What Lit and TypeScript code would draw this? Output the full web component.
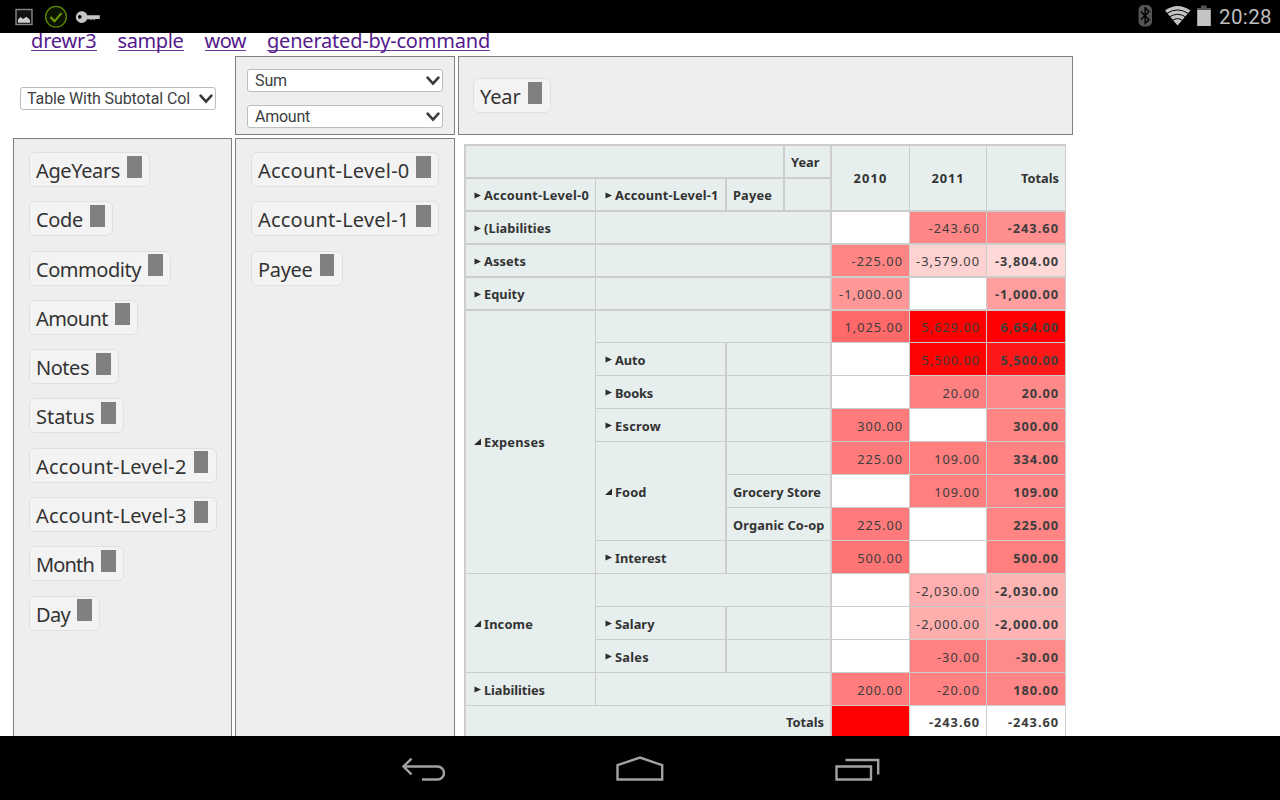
import { LitElement, html, css, svg } from "lit";
import { customElement, property } from "lit/decorators.js";
import { classMap } from "lit/directives/class-map.js";

/* A run of text tracked out or in so that it fills a given width. */
@customElement("fit-text")
class FitText extends LitElement {
  @property({ type: Number }) w = 0;
  @property() text = "";

  static styles = css`
    :host { display: inline-block; white-space: pre; }
    .run { display: inline-block; }
  `;

  updated() {
    const run = this.renderRoot.querySelector(".run") as HTMLElement;
    run.style.letterSpacing = "0px";
    const natural = run.getBoundingClientRect().width;
    const gap = (this.w - natural) / this.text.length;
    run.style.letterSpacing = gap.toFixed(3) + "px";
  }

  render() {
    return html`<span class="run">${this.text}</span>`;
  }
}

type Chip = [string, number];
const UNUSED: Chip[] = [
  ["AgeYears", 84], ["Code", 47], ["Commodity", 105], ["Amount", 72], ["Notes", 53],
  ["Status", 58.5], ["Account-Level-2", 150.5], ["Account-Level-3", 150.5], ["Month", 58], ["Day", 34],
];
const ROWS: Chip[] = [["Account-Level-0", 151.5], ["Account-Level-1", 151.5], ["Payee", 54.5]];
const LINKS: Chip[] = [["drewr3", 65.5], ["sample", 66], ["wow", 41.5], ["generated-by-command", 223]];

interface Head {
  t?: string; w?: number; col: string; row: string; mark?: "open" | "shut";
  thick?: boolean; low?: boolean; lift?: boolean; align?: "right" | "center";
}
const HEADS: Head[] = [
  { col: "1 / 4", row: "1", thick: true, low: true },
  { t: "Year", w: 28.5, col: "4", row: "1", thick: true, low: true },
  { t: "Account-Level-0", w: 105, col: "1", row: "2", mark: "shut", low: true },
  { t: "Account-Level-1", w: 103.5, col: "2", row: "2", mark: "shut", thick: true, low: true },
  { t: "Payee", w: 39, col: "3", row: "2", thick: true, low: true },
  { col: "4", row: "2", thick: true, low: true },
  { t: "2010", w: 34, col: "5", row: "1 / 3", align: "center", low: true, lift: true },
  { t: "2011", w: 33, col: "6", row: "1 / 3", align: "center", low: true, lift: true },
  { t: "Totals", w: 38, col: "7", row: "1 / 3", align: "right", low: true, lift: true },
  { t: "(Liabilities", w: 67, col: "1", row: "3", mark: "shut", low: true },
  { col: "2 / 5", row: "3", thick: true, low: true },
  { t: "Assets", w: 42, col: "1", row: "4", mark: "shut", low: true },
  { col: "2 / 5", row: "4", thick: true, low: true },
  { t: "Equity", w: 40.5, col: "1", row: "5", mark: "shut", low: true },
  { col: "2 / 5", row: "5", thick: true, low: true },
  { t: "Expenses", w: 61, col: "1", row: "6 / 14", mark: "open", lift: true },
  { col: "2 / 5", row: "6", thick: true },
  { t: "Auto", w: 30.5, col: "2", row: "7", mark: "shut", thick: true },
  { col: "3 / 5", row: "7", thick: true },
  { t: "Books", w: 38, col: "2", row: "8", mark: "shut", thick: true },
  { col: "3 / 5", row: "8", thick: true },
  { t: "Escrow", w: 46, col: "2", row: "9", mark: "shut", thick: true },
  { col: "3 / 5", row: "9", thick: true },
  { t: "Food", w: 31.5, col: "2", row: "10 / 13", mark: "open", thick: true },
  { col: "3 / 5", row: "10", thick: true },
  { t: "Grocery Store", w: 88, col: "3 / 5", row: "11", thick: true },
  { t: "Organic Co-op", w: 91.5, col: "3 / 5", row: "12", thick: true },
  { t: "Interest", w: 51.5, col: "2", row: "13", mark: "shut", thick: true },
  { col: "3 / 5", row: "13", thick: true },
  { t: "Income", w: 49, col: "1", row: "14 / 17", mark: "open" },
  { col: "2 / 5", row: "14", thick: true },
  { t: "Salary", w: 39.5, col: "2", row: "15", mark: "shut", thick: true },
  { col: "3 / 5", row: "15", thick: true },
  { t: "Sales", w: 34, col: "2", row: "16", mark: "shut", thick: true },
  { col: "3 / 5", row: "16", thick: true },
  { t: "Liabilities", w: 61, col: "1", row: "17", mark: "shut" },
  { col: "2 / 5", row: "17", thick: true },
  { t: "Totals", w: 38, col: "1 / 5", row: "18", align: "right", thick: true },
];

const VALUES: (number | null)[][] = [
  [null, -243.6, -243.6],
  [-225, -3579, -3804],
  [-1000, null, -1000],
  [1025, 5629, 6654],
  [null, 5500, 5500],
  [null, 20, 20],
  [300, null, 300],
  [225, 109, 334],
  [null, 109, 109],
  [225, null, 225],
  [500, null, 500],
  [null, -2030, -2030],
  [null, -2000, -2000],
  [null, -30, -30],
  [200, -20, 180],
];

const money = (v: number) =>
  v.toLocaleString("en-US", { minimumFractionDigits: 2, maximumFractionDigits: 2 });

const moneyWidth = (s: string, bold: boolean) => {
  let w = 0;
  for (const c of s) w += c === "." || c === "," ? 4.3 : c === "-" ? 5.6 : 8.3;
  return w;
};

const heat = (v: number, total: boolean) => {
  const f = Math.max(0, Math.round(total ? (6654 - v) * 0.0207 : (5629 - v) * 0.0228));
  return `rgb(255, ${f}, ${f})`;
};

@customElement("app-root")
class AppRoot extends LitElement {
  static styles = css`
    :host {
      display: flex; flex-direction: column; width: 1280px; height: 800px; overflow: hidden;
      background: #fff; color: #333; font-family: "Noto Sans", sans-serif;
    }
    * { box-sizing: border-box; }
    svg { display: block; }
    .status {
      height: 33px; flex: none; background: #000; display: flex; justify-content: space-between;
    }
    .right { display: flex; }
    .clock {
      font: 20.5px/35px Roboto, sans-serif; color: #bebebe; width: 61px;
    }
    .page { height: 703px; flex: none; overflow: hidden; padding-left: 13px; }
    .links {
      display: flex; gap: 21px; height: 23px; padding-left: 18px; font-size: 20px; line-height: 16px;
    }
    .links a { color: #551a8b; height: 18px; border-bottom: 1px solid #6b3a9b; white-space: nowrap; }
    .grid {
      display: grid; grid-template-columns: 219px 220px 615px; grid-template-rows: 79px 640px; gap: 3px;
    }
    .box { background: #eee; border: 1px solid #808080; }
    .renderer { padding: 31px 0 0 6.6px; }
    .aggregate { padding: 12px 0 0 11px; display: flex; flex-direction: column; gap: 12.5px; }
    .across { padding: 21px 0 0 14px; }
    .list { padding: 13px 0 0 15px; display: flex; flex-direction: column; align-items: flex-start; gap: 14.3px; }
    .select {
      width: 196px; height: 23px; border: 1px solid #bdbdbd; border-radius: 3px; background: #fff;
      display: flex; justify-content: space-between; padding: 0 2px 0 7px;
      font: 16px/22px Roboto, sans-serif; color: #3c3f42;
    }
    .renderer .select { padding-left: 6.4px; }
    .select svg { margin-top: 5px; }
    .chip {
      display: inline-flex; height: 35px; border: 1px solid #e0e0e0; border-radius: 6px; background: #f3f3f3;
      padding: 3px 7.5px 0 6px; gap: 7px; font-size: 20px; line-height: 30px; vertical-align: top;
    }
    .knob { width: 14.5px; height: 22px; background: #808080; margin-top: -0.5px; }
    .pivot {
      margin: 6px 0 0 6px; width: 602px; display: grid; font-size: 12.8px; line-height: 20px;
      grid-template-columns: 130px 131px 58px 47px 78px 77px 79px;
      grid-template-rows: repeat(5, 33px) 32px repeat(11, 33px) 32px;
      border-top: 2px solid #cdcdcd; border-left: 2px solid #cdcdcd;
    }
    .cell {
      border: 0 solid #cdcdcd; border-right-width: 1px; border-bottom-width: 1px;
      display: flex; align-items: center; padding: 1px 6px 0; white-space: nowrap;
    }
    .head { background: #e6eeee; font-weight: 700; }
    .thick { border-right-width: 2px; }
    .low { border-bottom-width: 2px; }
    .lift { padding-top: 0; padding-bottom: 1px; }
    .end { justify-content: flex-end; }
    .mid { justify-content: center; }
    .value { color: #3d3d3d; }
    .bold { font-weight: 700; }
    .mark { width: 10px; margin: 1px 0 0 2px; flex: none; }
    .inner { padding-left: 7px; }
    .full { background: #f00; }
    .nav { height: 64px; flex: none; background: #000; display: flex; justify-content: center; }
  `;

  chip([t, w]: Chip) {
    return html`<div class="chip"><fit-text .text=${t} .w=${w}></fit-text><span class="knob"></span></div>`;
  }

  select(t: string, w: number) {
    return html`<div class="select"><fit-text .text=${t} .w=${w}></fit-text>
      <svg width="14" height="12"><path d="M1.6 2.6L7 8.6L12.4 2.6" fill="none" stroke="#3a3a3a" stroke-width="2.6" stroke-linecap="round"/></svg></div>`;
  }

  head(h: Head) {
    const cls = {
      cell: true, head: true, thick: !!h.thick, low: !!h.low, lift: !!h.lift,
      end: h.align === "right", mid: h.align === "center", inner: !!h.mark && h.col === "2",
    };
    const shape = h.mark === "open" ? svg`<path d="M0 8L7 1.5V8Z"/>` : svg`<path d="M.5 1.5L7 4.5L.5 7.5Z"/>`;
    return html`<div class=${classMap(cls)} style="grid-column:${h.col};grid-row:${h.row}">
      ${h.mark ? html`<svg class="mark" width="10" height="10" fill="#2c2c2c">${shape}</svg>` : ""}
      ${h.t ? html`<fit-text .text=${h.t} .w=${h.w}></fit-text>` : ""}
    </div>`;
  }

  value(v: number | null, r: number, c: number) {
    const cls = { cell: true, value: true, end: true, bold: c === 2, low: r < 3 };
    const at = `grid-column:${c + 5};grid-row:${r + 3};`;
    if (v === null) return html`<div class=${classMap(cls)} style=${at}></div>`;
    const s = money(v);
    return html`<div class=${classMap(cls)} style="${at}background:${heat(v, c === 2)}">
      <fit-text .text=${s} .w=${moneyWidth(s, c === 2)}></fit-text></div>`;
  }

  render() {
    return html`
      <div class="status">
        <svg width="110" height="33">
          <rect x="16" y="9.5" width="16" height="15" fill="#111" stroke="#888" stroke-width="1.4"/>
          <path d="M18 22.8V19.5L20.5 17L23 19L26.5 16.8L30 20V22.8Z" fill="#ccc"/>
          <circle cx="56" cy="16.8" r="10.4" fill="#0c1400" stroke="#5b8a00" stroke-width="1.3"/>
          <path d="M50.5 17L54.5 21.3L61.5 13.2" fill="none" stroke="#6fa008" stroke-width="2"/>
          <path d="M82 11.2A5.900 5.900 0 1 0 87.200 19.200H90L91 20L92.500 19L94 20L95.500 19H99.800V15.200H87.200A5.900 5.900 0 0 0 82 11.200ZM79.800 15.100a1.800 1.800 0 1 1 0 3.600a1.800 1.800 0 0 1 0-3.600Z" fill="#c4c4c4" fill-rule="evenodd"/>
        </svg>
        <div class="right">
          <svg width="90" height="33">
            <rect x="9.500" y="5" width="13.500" height="21.500" rx="5" fill="#555"/>
            <path d="M11.800 11.500L20 19.700L16.200 23.200V8L20 11.500L11.800 19.700" fill="none" stroke="#000" stroke-width="1.500"/>
            <path d="M48.500 25.500L36 10.500Q48.500 1.500 61.500 10.500Z" fill="#c4c4c4"/>
            <path d="M38 13.300Q48.500 6.500 59 13.300M40.500 16.800Q48.500 11.800 56.500 16.800M43.500 20.300Q48.500 17 53.500 20.300" fill="none" stroke="#000" stroke-width="1"/>
            <path d="M68.200 8H72V5.400H77.500V8H81.800V11H68.200Z" fill="#555"/>
            <rect x="68.200" y="10" width="13.600" height="16" fill="#c4c4c4"/>
          </svg>
          <div class="clock"><fit-text text="20:28" .w=${53}></fit-text></div>
        </div>
      </div>
      <div class="page">
        <div class="links">${LINKS.map(([t, w]) => html`<a><fit-text .text=${t} .w=${w}></fit-text></a>`)}</div>
        <div class="grid">
          <div class="renderer">${this.select("Table With Subtotal Col", 163)}</div>
          <div class="box aggregate">${this.select("Sum", 32)}${this.select("Amount", 55)}</div>
          <div class="box across">${this.chip(["Year", 40.5])}</div>
          <div class="box list">${UNUSED.map((c) => this.chip(c))}</div>
          <div class="box list">${ROWS.map((c) => this.chip(c))}</div>
          <div>
            <div class="pivot">
              ${HEADS.map((h) => this.head(h))}
              ${VALUES.map((row, r) => row.map((v, c) => this.value(v, r, c)))}
              <div class="cell full"></div>
              <div class="cell end bold value"><fit-text text="-243.60" .w=${51}></fit-text></div>
              <div class="cell end bold value"><fit-text text="-243.60" .w=${51}></fit-text></div>
            </div>
          </div>
        </div>
      </div>
      <div class="nav">
        <svg width="520" height="64" fill="none" stroke="#a2a2a2" stroke-width="2.400">
          <path d="M31.500 22.700L23.500 30.500L31.500 38.300M24 30.500H57.500A6.500 6.500 0 0 1 57.500 43.500H42"/>
          <path d="M237.500 43.500V29.200L260 21.500L282.200 29.200V43.500Z"/>
          <path d="M456.500 30.500H491V43.500H456.500ZM465.500 24H498.200V38.500"/>
        </svg>
      </div>
    `;
  }
}
